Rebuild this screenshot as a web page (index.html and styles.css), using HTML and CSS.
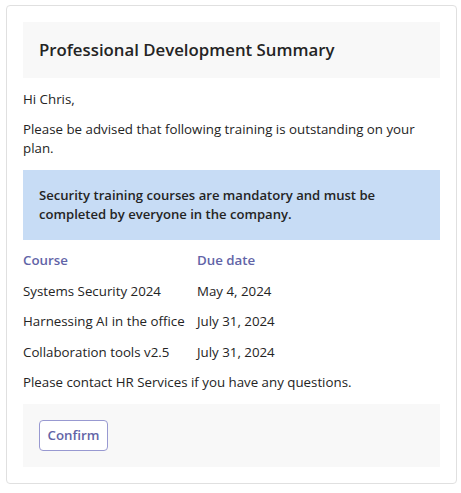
FILE: index.html
```html
<!DOCTYPE html>
<html lang="en">
<head>
<meta charset="utf-8">
<title>Professional Development Summary</title>
<link rel="stylesheet" href="styles.css">
</head>
<body>
<div class="card">
  <div class="header"><h1 class="title">Professional Development Summary</h1></div>
  <p class="text">Hi Chris,</p>
  <p class="text">Please be advised that following training is outstanding on your plan.</p>
  <div class="notice">Security training courses are mandatory and must be completed by everyone in the company.</div>
  <div class="table">
    <div class="th">Course</div><div class="th">Due date</div>
  </div>
  <div class="table"><div>Systems Security 2024</div><div>May 4, 2024</div></div>
  <div class="table"><div>Harnessing AI in the office</div><div>July 31, 2024</div></div>
  <div class="table"><div>Collaboration tools v2.5</div><div>July 31, 2024</div></div>
  <p class="text">Please contact HR Services if you have any questions.</p>
  <div class="actions"><button class="btn" type="button">Confirm</button></div>
</div>
</body>
</html>
```
FILE: styles.css
```css
html, body { margin: 0; background: #fff; }
body {
  padding: 5px 4px 0 6px;
  font-family: "Open Sans", "Noto Sans", sans-serif;
  font-size: 13.3px;
  line-height: 19px;
  color: #242424;
}
.card {
  width: 451px;
  box-sizing: border-box;
  border: 1px solid #e0e0e0;
  border-radius: 4px;
  padding: 16px;
  display: flex;
  flex-direction: column;
  gap: 11.5px;
}
.header { background: #f8f8f8; padding: 16px; }
.title { margin: 0; font-size: 16.8px; line-height: 24px; font-weight: 600; }
.text { margin: 0; }
.notice {
  background: #c7dcf5;
  padding: 16px;
  font-weight: 600;
  font-size: 13.1px;
}
.table {
  display: grid;
  grid-template-columns: 174px 1fr;
}
.th { color: #6264a7; font-weight: 600; }
.actions { background: #f8f8f8; padding: 16px; }
.btn {
  font: inherit;
  font-weight: 600;
  color: #6264a7;
  background: #fff;
  border: 1px solid #9899d1;
  border-radius: 4px;
  height: 31px;
  padding: 0 7.5px;
}
```
